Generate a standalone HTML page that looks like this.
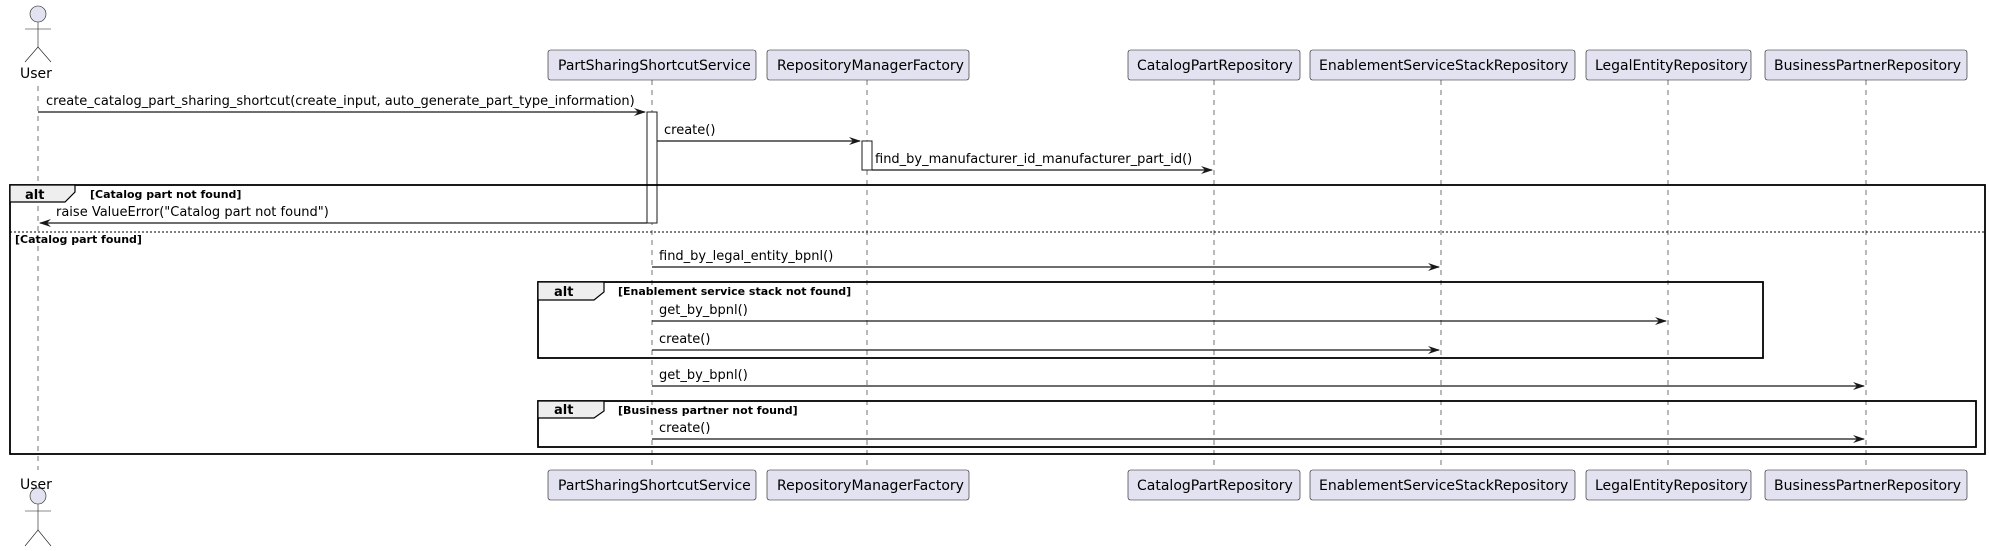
<!DOCTYPE html>
<html><head><meta charset="utf-8"><style>
html,body{margin:0;padding:0;background:#fff;}
svg{display:block;}
text{font-family:"DejaVu Sans","Liberation Sans",sans-serif;}
.m{font-size:13px;fill:#000;}
.p{font-size:14px;fill:#000;}
.b{font-size:11px;font-weight:bold;fill:#000;}
.bt{font-size:13px;font-weight:bold;fill:#000;}
.ll{stroke:#181818;stroke-width:0.6;stroke-dasharray:5,5;}
.ar{stroke:#181818;stroke-width:1.2;}
.bx{fill:#E2E2F0;stroke:#181818;stroke-width:0.6;}
.fr{fill:none;stroke:#000;stroke-width:1.8;}
</style></head><body>
<svg width="1989" height="551" viewBox="0 0 1989 551" xmlns="http://www.w3.org/2000/svg">
<!-- lifelines -->
<line class="ll" x1="38" y1="86" x2="38" y2="470"/>
<line class="ll" x1="652" y1="80" x2="652" y2="469"/>
<line class="ll" x1="867" y1="80" x2="867" y2="469"/>
<line class="ll" x1="1214" y1="80" x2="1214" y2="469"/>
<line class="ll" x1="1441" y1="80" x2="1441" y2="469"/>
<line class="ll" x1="1668" y1="80" x2="1668" y2="469"/>
<line class="ll" x1="1866" y1="80" x2="1866" y2="469"/>

<!-- top actor -->
<circle cx="38" cy="14" r="8" fill="#E2E2F0" stroke="#181818" stroke-width="0.6"/>
<line x1="38" y1="22" x2="38" y2="47" stroke="#181818" stroke-width="0.6"/>
<line x1="25" y1="29" x2="51" y2="29" stroke="#181818" stroke-width="0.6"/>
<path d="M25,62 L38,47 L51,62" fill="none" stroke="#181818" stroke-width="0.6"/>
<text class="p" x="20" y="78">User</text>
<!-- bottom actor -->
<text class="p" x="20" y="489">User</text>
<circle cx="38" cy="496" r="8" fill="#E2E2F0" stroke="#181818" stroke-width="0.6"/>
<line x1="38" y1="504" x2="38" y2="530" stroke="#181818" stroke-width="0.6"/>
<line x1="25" y1="511" x2="51" y2="511" stroke="#181818" stroke-width="0.6"/>
<path d="M25,546 L38,530 L51,546" fill="none" stroke="#181818" stroke-width="0.6"/>

<!-- participants top -->
<g>
<rect class="bx" x="548" y="50" width="208" height="30" rx="2.5"/><text class="p" x="558" y="70">PartSharingShortcutService</text>
<rect class="bx" x="767" y="50" width="202" height="30" rx="2.5"/><text class="p" x="777" y="70">RepositoryManagerFactory</text>
<rect class="bx" x="1128" y="50" width="172" height="30" rx="2.5"/><text class="p" x="1137" y="70">CatalogPartRepository</text>
<rect class="bx" x="1310" y="50" width="265" height="30" rx="2.5"/><text class="p" x="1319" y="70">EnablementServiceStackRepository</text>
<rect class="bx" x="1586" y="50" width="165" height="30" rx="2.5"/><text class="p" x="1595" y="70">LegalEntityRepository</text>
<rect class="bx" x="1765" y="50" width="202" height="30" rx="2.5"/><text class="p" x="1774" y="70">BusinessPartnerRepository</text>
</g>
<!-- participants bottom -->
<g>
<rect class="bx" x="548" y="470" width="208" height="30" rx="2.5"/><text class="p" x="558" y="490">PartSharingShortcutService</text>
<rect class="bx" x="767" y="470" width="202" height="30" rx="2.5"/><text class="p" x="777" y="490">RepositoryManagerFactory</text>
<rect class="bx" x="1128" y="470" width="172" height="30" rx="2.5"/><text class="p" x="1137" y="490">CatalogPartRepository</text>
<rect class="bx" x="1310" y="470" width="265" height="30" rx="2.5"/><text class="p" x="1319" y="490">EnablementServiceStackRepository</text>
<rect class="bx" x="1586" y="470" width="165" height="30" rx="2.5"/><text class="p" x="1595" y="490">LegalEntityRepository</text>
<rect class="bx" x="1765" y="470" width="202" height="30" rx="2.5"/><text class="p" x="1774" y="490">BusinessPartnerRepository</text>
</g>

<!-- activations -->
<rect x="647" y="112" width="10" height="111" fill="#fff" stroke="#181818" stroke-width="1"/>
<rect x="862" y="141" width="10" height="29" fill="#fff" stroke="#181818" stroke-width="1"/>

<!-- messages -->
<line class="ar" x1="38" y1="112" x2="645" y2="112"/><path d="M634,108 L646,112 L634,116 L638,112 Z" fill="#181818"/>
<text class="m" x="46" y="105">create_catalog_part_sharing_shortcut(create_input, auto_generate_part_type_information)</text>

<line class="ar" x1="657" y1="141" x2="860" y2="141"/><path d="M849,137 L861,141 L849,145 L853,141 Z" fill="#181818"/>
<text class="m" x="664" y="134">create()</text>

<line class="ar" x1="872" y1="170" x2="1212" y2="170"/><path d="M1201,166 L1213,170 L1201,174 L1205,170 Z" fill="#181818"/>
<text class="m" x="875" y="163">find_by_manufacturer_id_manufacturer_part_id()</text>

<line class="ar" x1="40" y1="223" x2="647" y2="223"/><path d="M51,219 L39,223 L51,227 L47,223 Z" fill="#181818"/>
<text class="m" x="56" y="216">raise ValueError("Catalog part not found")</text>

<line class="ar" x1="652" y1="267" x2="1439" y2="267"/><path d="M1428,263 L1440,267 L1428,271 L1432,267 Z" fill="#181818"/>
<text class="m" x="659" y="260">find_by_legal_entity_bpnl()</text>

<line class="ar" x1="652" y1="321" x2="1666" y2="321"/><path d="M1655,317 L1667,321 L1655,325 L1659,321 Z" fill="#181818"/>
<text class="m" x="659" y="314">get_by_bpnl()</text>

<line class="ar" x1="652" y1="350" x2="1439" y2="350"/><path d="M1428,346 L1440,350 L1428,354 L1432,350 Z" fill="#181818"/>
<text class="m" x="659" y="343">create()</text>

<line class="ar" x1="652" y1="386" x2="1864" y2="386"/><path d="M1853,382 L1865,386 L1853,390 L1857,386 Z" fill="#181818"/>
<text class="m" x="659" y="379">get_by_bpnl()</text>

<line class="ar" x1="652" y1="439" x2="1864" y2="439"/><path d="M1853,435 L1865,439 L1853,443 L1857,439 Z" fill="#181818"/>
<text class="m" x="659" y="432">create()</text>

<!-- outer alt -->
<rect class="fr" x="10" y="185" width="1975" height="269"/>
<path d="M10,185 L75,185 L75,192 L65,202 L10,202 Z" fill="#EEEEEE" stroke="#000" stroke-width="1.2"/>
<text class="bt" x="25" y="199">alt</text>
<text class="b" x="90" y="198">[Catalog part not found]</text>
<line x1="10" y1="232" x2="1985" y2="232" stroke="#000" stroke-width="1" stroke-dasharray="2,2"/>
<text class="b" x="15" y="243">[Catalog part found]</text>

<!-- inner alt 1 -->
<rect class="fr" x="538" y="282" width="1225" height="76"/>
<path d="M538,282 L604,282 L604,292 L594,300 L538,300 Z" fill="#EEEEEE" stroke="#000" stroke-width="1.2"/>
<text class="bt" x="554" y="296">alt</text>
<text class="b" x="618" y="295">[Enablement service stack not found]</text>

<!-- inner alt 2 -->
<rect class="fr" x="538" y="401" width="1438" height="46"/>
<path d="M538,401 L604,401 L604,411 L594,418 L538,418 Z" fill="#EEEEEE" stroke="#000" stroke-width="1.2"/>
<text class="bt" x="554" y="414">alt</text>
<text class="b" x="618" y="414">[Business partner not found]</text>
</svg>
</body></html>
